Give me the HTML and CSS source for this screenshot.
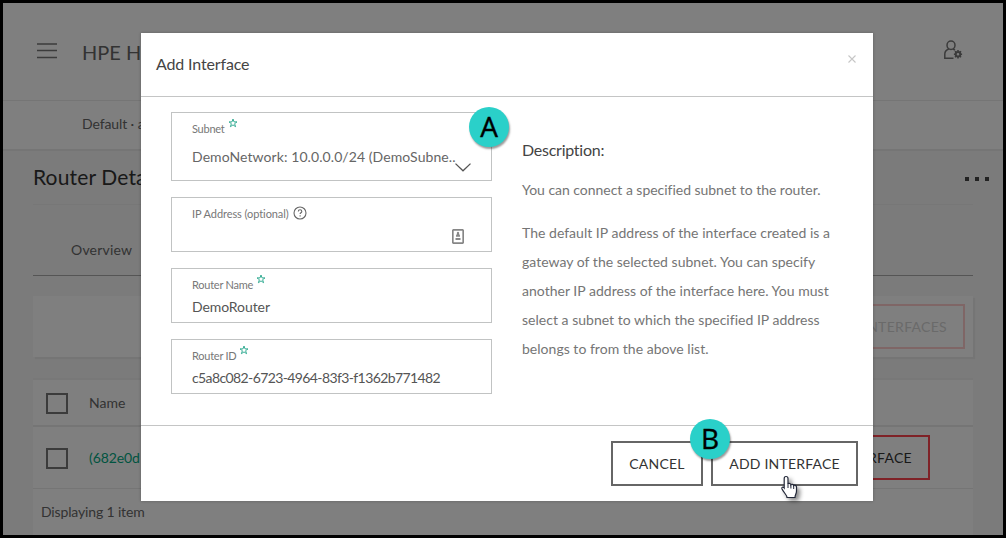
FILE: index.html
```html
<!DOCTYPE html>
<html lang="en">
<head>
<meta charset="utf-8">
<title>Add Interface</title>
<link rel="stylesheet" href="styles.css">
</head>
<body>
<div class="frame">
  <header class="masthead">
    <svg class="menu" width="20" height="16" viewBox="0 0 20 16"><path d="M0 1h20M0 7.500h20M0 14.500h20" stroke="#777" stroke-width="1.500"/></svg>
    <span class="brand">HPE H</span>
    <svg class="user" width="20" height="20" viewBox="0 0 20 20" fill="none" stroke="#777" stroke-width="1.500">
      <ellipse cx="8" cy="5.200" rx="4" ry="4.200"/><path d="M5.800 9C3 10 1.800 11.700 1.800 14v4.200h8.700M10 9l2 1.200"/>
      <circle cx="15" cy="14.200" r="2.300" stroke-width="2"/><path d="M15 10v1.600M15 16.800v1.600M10.900 14.200h1.600M17.500 14.200h1.600M12 11.200l1.200 1.200M16.800 16l1.200 1.200M12 17.200l1.200-1.200M16.800 12.400l1.200-1.200" stroke-width="1.600"/>
    </svg>
  </header>
  <div class="crumbs">Default · a</div>
  <main class="page">
    <div class="title-row"><h1 class="title">Router Deta</h1><span class="dots"><i></i><i></i><i></i></span></div>
    <nav class="tabs">Overview</nav>
    <div class="toolbar"><span class="danger off">INTERFACES</span></div>
    <div class="table">
      <div class="row head"><span class="check"></span><span>Name</span></div>
      <div class="row item"><span class="check"></span><span class="link">(682e0d</span><span class="danger">INTERFACE</span></div>
      <div class="row foot">Displaying 1 item</div>
    </div>
  </main>
  <div class="overlay">
    <section class="modal">
      <div class="modal-head"><h2 class="modal-title">Add Interface</h2>
        <svg class="close" width="8" height="8" viewBox="0 0 8 8"><path d="M.5 .5l7 7M7.500 .5l-7 7" stroke="#c6c6c6" stroke-width="1.100"/></svg>
      </div>
      <div class="modal-body">
        <div class="fields">
          <div class="field tall"><div class="label"><span>Subnet</span><svg class="star" viewBox="0 0 10 10"><path d="M5 1l1 2.900h3L6.600 5.700l1 3L5 6.900 2.400 8.700l1-3L1 3.900h3z"/></svg></div>
            <div class="value select">DemoNetwork: 10.0.0.0/24 (DemoSubne..</div>
            <svg class="chevron" width="16" height="9" viewBox="0 0 16 9"><path d="M.5 .6L8 7.800 15.500 .6" fill="none" stroke="#555" stroke-width="1.300"/></svg>
          </div>
          <div class="field"><div class="label"><span class="optional">IP Address (optional)</span><svg class="help" width="14" height="14" viewBox="0 0 14 14" fill="none" stroke="#666"><circle cx="7" cy="7" r="6" stroke-width="1.100"/><path d="M5.300 5.600c0-2.500 3.500-2.300 3.500-.2 0 1.400-1.700 1.300-1.700 2.700M7.100 9.300v1.200" stroke-width="1.100"/></svg></div>
            <svg class="card" width="12" height="15" viewBox="0 0 12 15"><rect x=".8" y=".8" width="10.400" height="13.400" rx="1" fill="#fff" stroke="#868686" stroke-width="1.700"/><path d="M6 2.800a1.300 1.300 0 0 1 1 2L8 6.500v1.300H4V6.500l1-1.700a1.300 1.300 0 0 1 1-2zM3.500 9h5v2h-5z" fill="#888"/></svg>
          </div>
          <div class="field"><div class="label"><span>Router Name</span><svg class="star" viewBox="0 0 10 10"><path d="M5 1l1 2.900h3L6.600 5.700l1 3L5 6.900 2.400 8.700l1-3L1 3.900h3z"/></svg></div>
            <div class="value">DemoRouter</div></div>
          <div class="field"><div class="label"><span>Router ID</span><svg class="star" viewBox="0 0 10 10"><path d="M5 1l1 2.900h3L6.600 5.700l1 3L5 6.900 2.400 8.700l1-3L1 3.900h3z"/></svg></div>
            <div class="value uuid">c5a8c082-6723-4964-83f3-f1362b771482</div></div>
        </div>
        <div class="desc">
          <h3 class="desc-title">Description:</h3>
          <p class="para">You can connect a specified subnet to the router.</p>
          <p class="para">The default IP address of the interface created is a<br>gateway of the selected subnet. You can specify<br>another IP address of the interface here. You must<br>select a subnet to which the specified IP address<br>belongs to from the above list.</p>
        </div>
      </div>
      <div class="modal-foot"><button class="btn cancel">CANCEL</button><button class="btn add">ADD INTERFACE</button></div>
      <span class="marker a">A</span><span class="marker b">B</span>
      <svg class="cursor" width="20" height="26" viewBox="0 0 20 26"><path d="M6 1.500c1.500 0 2 .8 2 2V9c0-1 2.700-1 2.900.8.5-.9 2.600-.7 2.800.8.700-.8 2.800-.4 2.800 1.400v4c0 3-1.500 3.500-1.500 6.500H7c0-2.500-3-4.500-5-8.500-.8-1.700 1-2.600 2.200-1V3.500c0-1.200.5-2 1.800-2z" fill="#fff" stroke="#222738" stroke-width="1.200"/><path d="M8 8.500V13M10.900 10v3.500M13.700 11v3" stroke="#222738"/></svg>
    </section>
  </div>
</div>
</body>
</html>
```
FILE: styles.css
```css
* { box-sizing: border-box; }
body { margin: 0; background: #000; font-family: Lato, "Open Sans", sans-serif; font-size: 14px; color: #666; overflow: hidden; }
h1, h2, h3, p { margin: 0; font-weight: 400; }
svg { display: block; flex: none; }
.frame { position: relative; width: 1006px; height: 538px; border: 3px solid #000; background: #f6f6f6; overflow: hidden; }
.masthead { height: 98px; border-bottom: 1px solid #eaeaea; background: #fff; display: flex; align-items: center; padding: 0 40px 0 34px; }
.menu { margin-top: -2px; }
.brand { margin-left: 25px; font-size: 20px; letter-spacing: 0; }
.user { margin-left: auto; margin-top: -3px; }
.crumbs { height: 50px; border-bottom: 2px solid #ebebeb; background: #fff; padding-left: 79px; line-height: 45px; letter-spacing: -.1px; }
.page { padding: 0 30px; }
.title-row { height: 54px; display: flex; align-items: center; justify-content: space-between; border-bottom: 1px solid #eee; }
.title { font-size: 21px; color: #333; letter-spacing: .15px; padding-bottom: 2px; }
.dots { display: flex; gap: 6px; margin-right: -16px; padding-top: 3px; }
.dots i { width: 4px; height: 4px; background: #444; }
.tabs { height: 71px; border-bottom: 1px solid #aaa; line-height: 89px; padding-left: 38px; letter-spacing: .2px; }
.toolbar { height: 61px; margin-top: 20px; background: #fff; box-shadow: 2px 2px 1px #ebebeb; display: flex; align-items: center; justify-content: flex-end; padding-right: 8px; }
.danger { display: flex; align-items: center; justify-content: flex-end; width: 160px; height: 45px; border: 2px solid #ff454f; color: #333; padding: 0 16px; letter-spacing: .3px; margin-left: auto; }
.danger.off { border-color: #fcc; color: #d4d4d4; }
.table { margin-top: 21px; background: #fff; border-top: 2px solid #f0f0f0; }
.row { display: flex; align-items: center; }
.row.head { height: 47px; border-bottom: 2px solid #ebebeb; padding: 0 0 1px 13px; }
.row.head .check { margin-top: 2px; }
.row.item { height: 62px; border-bottom: 1px solid #eaeaea; padding: 0 43px 1px 13px; }
.row.item .check { margin-top: 2px; }
.row.foot { height: 46px; padding: 0 0 2px 8px; letter-spacing: -.15px; }
.check { width: 22px; height: 21px; border: 2px solid #777; margin-right: 21px; }
.link { color: #01a982; letter-spacing: -.1px; }
.overlay { position: absolute; inset: 0; background: rgba(0,0,0,.5); }
.modal { position: absolute; left: 138px; top: 30px; width: 732px; height: 468px; background: #fff; box-shadow: 0 0 3px rgba(0,0,0,.25); }
.modal-head { height: 64px; border-bottom: 1px solid #c4c5c5; display: flex; align-items: center; justify-content: space-between; padding: 0 17px 0 15px; }
.modal-title { font-size: 16px; color: #444; letter-spacing: -.15px; padding-bottom: 2px; }
.close { margin-top: -11px; }
.modal-body { height: 328px; padding: 15px 30px 0; display: flex; gap: 30px; }
.fields { width: 321px; display: flex; flex-direction: column; gap: 16px; }
.field { position: relative; height: 55px; border: 1px solid #c1c3c3; padding: 6px 20px 0; flex: none; }
.field.tall { height: 69px; }
.label { display: flex; height: 21px; font-size: 11px; line-height: 20px; color: #777; white-space: nowrap; letter-spacing: -.25px; }
.optional { letter-spacing: -.08px; }
.star { width: 10px; height: 10px; margin: -1px 0 0 3px; fill: none; stroke: #22a58a; stroke-width: .9; }
.help { margin: 2px 0 0 4px; }
.value { white-space: nowrap; line-height: 22px; color: #555; letter-spacing: -.08px; }
.value.select { padding-top: 6px; color: #666; letter-spacing: .08px; }
.value.uuid { letter-spacing: -.61px; }
.chevron { position: absolute; right: 20px; top: 50px; }
.card { position: absolute; right: 27px; top: 31px; }
.desc { padding-top: 28px; white-space: nowrap; }
.desc-title { font-size: 16px; line-height: 20px; color: #444; letter-spacing: -.25px; }
.para { line-height: 29px; margin-top: 14px; color: #757575; letter-spacing: .02px; }
.desc-title + .para { margin-top: 15px; letter-spacing: -.03px; }
.modal-foot { height: 76px; border-top: 1px solid #c4c5c5; display: flex; justify-content: flex-end; gap: 8px; padding: 15px 15px 0; }
.btn { height: 45px; border: 2px solid #666; background: #fff; font: 14px Lato, "Open Sans", sans-serif; color: #333; padding: 0; white-space: nowrap; letter-spacing: .2px; }
.cancel { width: 92px; }
.add { width: 147px; }
.marker { position: absolute; width: 40px; height: 40px; border-radius: 50%; background: #2ad0c9; box-shadow: 1px 2px 2px rgba(0,0,0,.4); color: #000; font: 28px/39px "Open Sans", sans-serif; text-align: center; -webkit-text-stroke: .4px #000; }
.marker.a { left: 328px; top: 74px; }
.marker.b { left: 549px; top: 386px; }
.cursor { position: absolute; left: 639px; top: 442px; filter: drop-shadow(3px 3px 2px rgba(0,0,0,.45)); }
```
